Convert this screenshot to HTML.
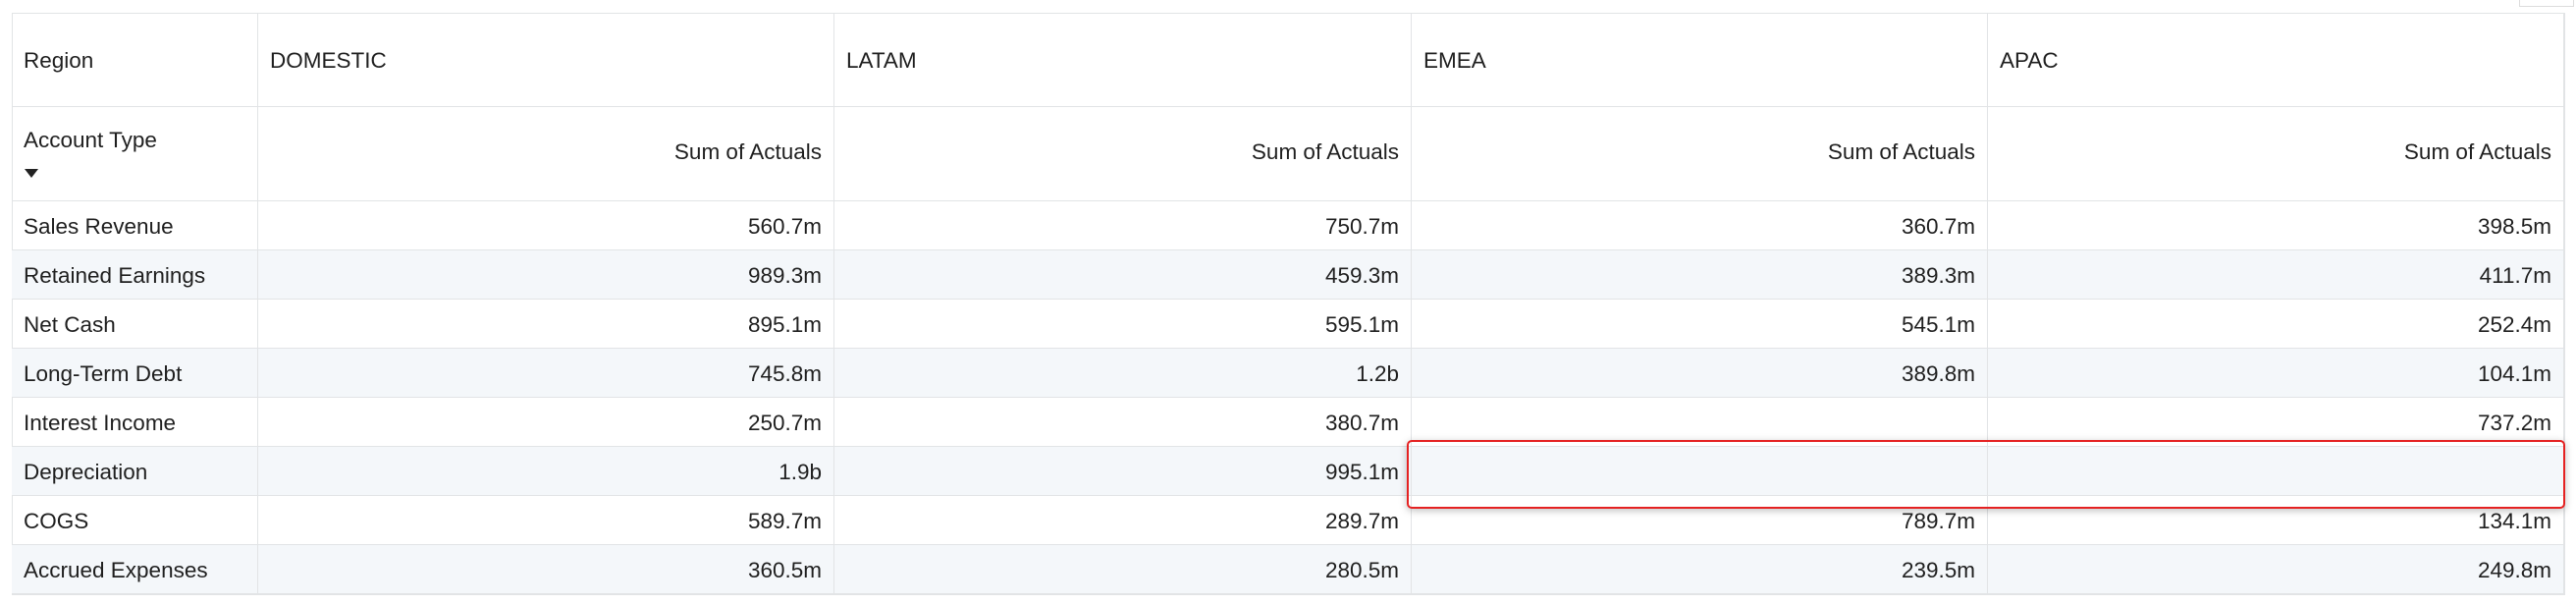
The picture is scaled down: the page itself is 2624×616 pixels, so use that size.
<!DOCTYPE html>
<html><head><meta charset="utf-8"><style>
body{margin:0;width:2624px;height:616px;background:#fff;position:relative;overflow:hidden;font-family:"Liberation Sans",sans-serif;font-size:22.5px;color:#1f1f1f}
.c{position:absolute;box-sizing:border-box;border-right:1.5px solid #e2e4e6;border-bottom:1.5px solid #e2e4e6;display:flex;align-items:center;padding:2px 12px 0;white-space:nowrap}
.r{justify-content:flex-end}
.alt{background:#f4f7fa}
</style></head><body>
<div style="position:absolute;left:2566px;top:-2px;width:56px;height:9px;border:1.5px solid #ddd;box-sizing:border-box"></div>
<div style="position:absolute;left:12px;top:13px;width:2601px;height:593px;border:1.5px solid #e2e4e6;box-sizing:border-box"></div>
<div id="t"></div>
<div style="position:absolute;left:1433px;top:448px;width:1180px;height:70px;border:2px solid #e52222;border-radius:5px;box-sizing:border-box;box-shadow:0 2px 8px rgba(0,0,0,.25)"></div>
<script>
var X=[12,263,850,1438,2025,2612];
var h='';
function cell(i,y,hh,txt,cls,st){h+='<div class="c '+(cls||'')+'" style="left:'+X[i]+'px;top:'+y+'px;width:'+(X[i+1]-X[i])+'px;height:'+hh+'px;'+(st||'')+'">'+txt+'</div>';}
var hd=['Region','DOMESTIC','LATAM','EMEA','APAC'];
for(var i=0;i<5;i++)cell(i,13,96,hd[i]);
cell(0,109,96,'<div style="margin-top:-4px">Account Type<div style="width:0;height:0;border-left:7px solid transparent;border-right:7px solid transparent;border-top:9px solid #222;margin-top:16px;margin-left:1px"></div></div>');
for(var i=1;i<5;i++)cell(i,109,96,'Sum of Actuals','r','padding-bottom:6px');
var rows=[['Sales Revenue','560.7m','750.7m','360.7m','398.5m'],['Retained Earnings','989.3m','459.3m','389.3m','411.7m'],['Net Cash','895.1m','595.1m','545.1m','252.4m'],['Long-Term Debt','745.8m','1.2b','389.8m','104.1m'],['Interest Income','250.7m','380.7m','','737.2m'],['Depreciation','1.9b','995.1m','',''],['COGS','589.7m','289.7m','789.7m','134.1m'],['Accrued Expenses','360.5m','280.5m','239.5m','249.8m']];
rows.forEach(function(r,k){var y=205+k*50;var a=k%2?'alt':'';for(var i=0;i<5;i++)cell(i,y,50,r[i],(i?'r ':'')+a);});
document.getElementById('t').outerHTML=h;
</script>
</body></html>
